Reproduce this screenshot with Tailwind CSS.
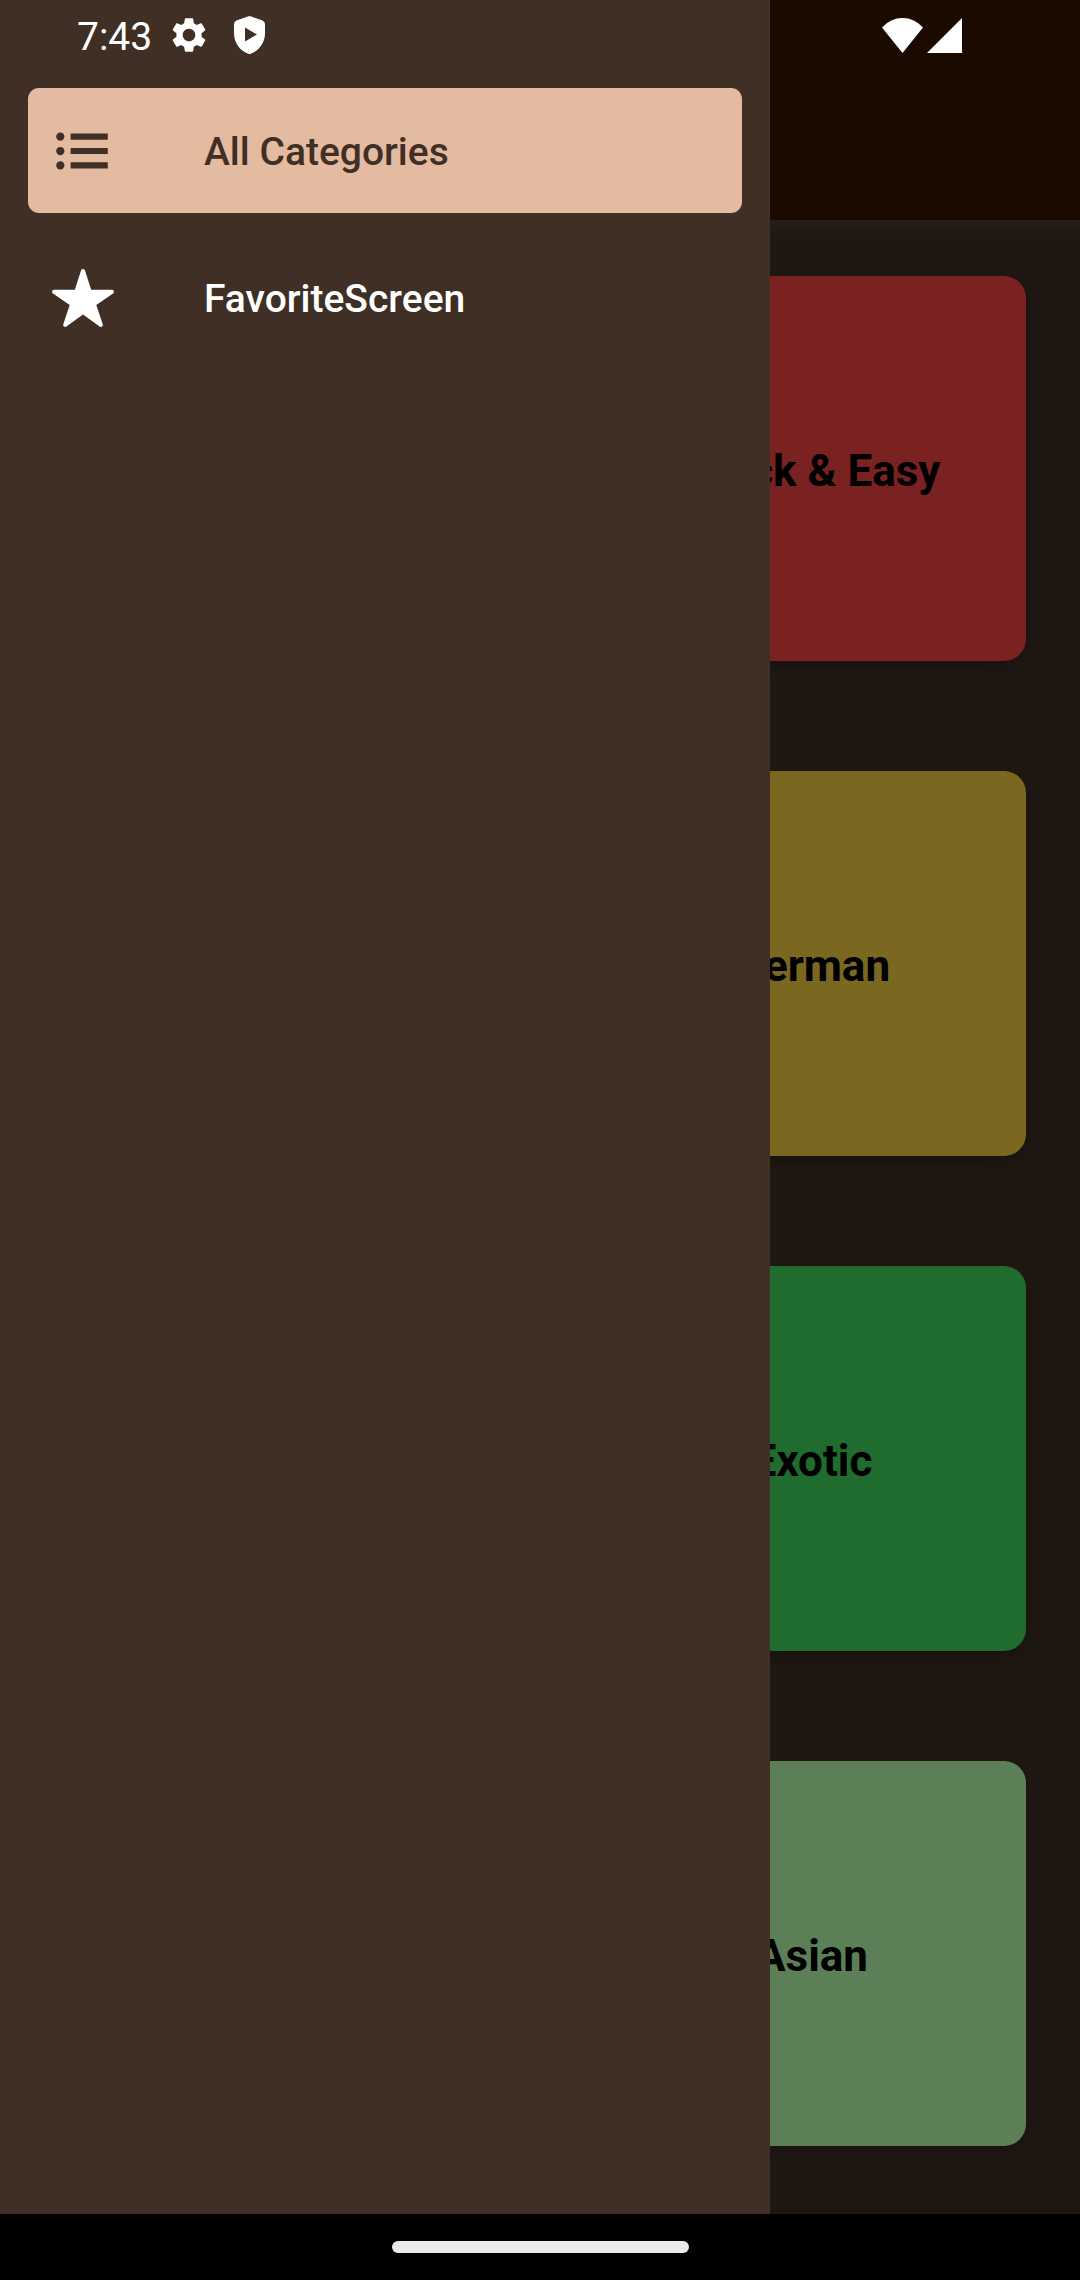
<!DOCTYPE html>
<html lang="en">
<head>
<meta charset="utf-8">
<meta name="viewport" content="width=device-width, initial-scale=1">
<title>All Categories</title>
<script src="https://cdn.jsdelivr.net/npm/@tailwindcss/browser@4"></script>
</head>
<body class="bg-black font-[Roboto,sans-serif]">
<div class="relative flex min-h-screen flex-col">

  <!-- Categories screen, dimmed by the scrim -->
  <div class="relative flex flex-1 flex-col bg-[#3f2f25]">
    <header class="h-[220px] bg-[#351401]"></header>
    <div class="h-4 bg-linear-to-b from-[#4a3b38] to-[#3f2f25]"></div>
    <main class="grid grid-cols-2 gap-x-[108px] gap-y-[110px] px-[54px] pt-10">
      <button class="col-start-2 h-[385px] rounded-[22px] bg-[#f54242] pt-1 pl-1 text-[44px] font-bold text-black shadow-[0_6px_16px_rgba(0,0,0,0.25)]">Quick &amp; Easy</button>
      <button class="col-start-2 h-[385px] rounded-[22px] bg-[#f5d142] pt-1 pl-1 text-[44px] font-bold text-black shadow-[0_6px_16px_rgba(0,0,0,0.25)]">German</button>
      <button class="col-start-2 h-[385px] rounded-[22px] bg-[#41d95d] pt-1 pl-1 text-[44px] font-bold text-black shadow-[0_6px_16px_rgba(0,0,0,0.25)]">Exotic</button>
      <button class="col-start-2 h-[385px] rounded-[22px] bg-[#b9ffb0] pt-1 pl-1 text-[44px] font-bold text-black shadow-[0_6px_16px_rgba(0,0,0,0.25)]">Asian</button>
    </main>

    <!-- Scrim and drawer lie over the screen -->
    <div class="absolute inset-0 bg-black/50"></div>
    <nav class="absolute inset-y-0 left-0 flex w-[770px] max-w-full flex-col gap-[22px] bg-[#3f2f25] px-7 pt-[88px]" aria-label="Drawer">
      <a href="#categories" aria-current="page" class="flex h-[125px] items-center gap-[88px] rounded-[11px] bg-[#e4baa1] px-[22px] text-[#3f2f25]">
        <svg class="size-[66px]" viewBox="0 0 512 512" fill="currentColor" aria-hidden="true">
          <circle cx="80" cy="144" r="32"/><circle cx="80" cy="256" r="32"/><circle cx="80" cy="368" r="32"/>
          <path d="M160 120h288v48H160zM160 232h288v48H160zM160 344h288v48H160z"/>
        </svg>
        <span class="pt-1 text-[39px] font-medium">All Categories</span>
      </a>
      <a href="#favorites" class="flex h-[125px] items-center gap-[88px] rounded-[11px] px-[22px] text-white">
        <svg class="size-[66px]" viewBox="0 0 512 512" fill="currentColor" aria-hidden="true">
          <path d="M394 480a16 16 0 01-9.39-3L256 383.76 127.39 477a16 16 0 01-24.55-18.08L153 310.35 23 221.2a16 16 0 019-29.2h160.38l48.4-148.95a16 16 0 0130.44 0l48.4 149H480a16 16 0 019.05 29.2L359 310.35l50.13 148.53A16 16 0 01394 480z"/>
        </svg>
        <span class="pt-1 text-[39px] font-medium">FavoriteScreen</span>
      </a>
    </nav>
  </div>

  <!-- System navigation bar -->
  <div class="flex h-[66px] items-center justify-center bg-black">
    <div class="h-3 w-[297px] rounded-full bg-[#ebebeb]"></div>
  </div>

  <!-- System status bar, drawn over the app -->
  <div class="absolute inset-x-0 top-0 flex h-[70px] items-center justify-between pr-[118px] pl-[77px] text-white">
    <div class="flex items-center">
      <span class="pt-1 text-[39px]">7:43</span>
      <svg class="ml-4 size-[42px]" viewBox="0 0 24 24" fill="currentColor" aria-hidden="true">
        <path d="M19.14 12.94c.04-.3.06-.61.06-.94 0-.32-.02-.64-.07-.94l2.03-1.58a.49.49 0 00.12-.61l-1.92-3.32a.488.488 0 00-.59-.22l-2.39.96c-.5-.38-1.03-.7-1.62-.94l-.36-2.54a.484.484 0 00-.48-.41h-3.84c-.24 0-.43.17-.47.41l-.36 2.54c-.59.24-1.13.57-1.62.94l-2.39-.96c-.22-.08-.47 0-.59.22L2.740 8.870c-.12.21-.08.47.12.61l2.03 1.58c-.05.3-.09.63-.09.94s.02.64.07.94l-2.03 1.58a.49.49 0 00-.12.61l1.92 3.32c.12.22.37.29.59.22l2.39-.96c.5.38 1.03.7 1.62.94l.36 2.54c.05.24.24.41.48.41h3.84c.24 0 .44-.17.47-.41l.36-2.54c.59-.24 1.13-.56 1.62-.94l2.39.96c.22.08.47 0 .59-.22l1.92-3.32c.12-.22.07-.47-.12-.61l-2.01-1.58zM12 15.600c-1.98 0-3.6-1.62-3.6-3.6s1.62-3.6 3.6-3.6 3.6 1.62 3.6 3.6-1.62 3.6-3.6 3.6z"/>
      </svg>
      <svg class="ml-6 h-[38px] w-[31px]" viewBox="0 0 31 38" fill="currentColor" fill-rule="evenodd" aria-hidden="true">
        <path d="M14.400.3Q15.500 0 16.600.3L28.500 4.500Q31 5.500 31 8.200V17.500C31 27 24.500 35 16.700 37.700Q15.500 38.200 14.300 37.700C6.500 35 0 27 0 17.500V8.200Q0 5.500 2.500 4.500ZM11 11.500V25.500L23 18.500Z"/>
      </svg>
    </div>
    <div class="flex items-center gap-1">
      <svg class="h-[35px] w-[41px]" viewBox="0 0 41 35" fill="currentColor" aria-hidden="true"><path d="M0 9.500Q8.500 0 20.500 0T41 9.500L20.500 35Z"/></svg>
      <svg class="size-[35px]" viewBox="0 0 35 35" fill="currentColor" aria-hidden="true"><path d="M35 0V35H0Z"/></svg>
    </div>
  </div>
</div>
</body>
</html>
